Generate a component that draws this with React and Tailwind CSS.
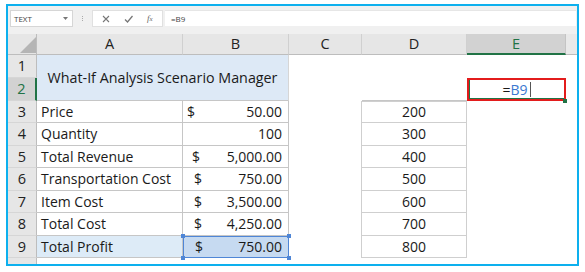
export default function App() {
  const rows = [
    { n: 3, a: 'Price', d: '$', dp: 'pl-[4px]', v: '50.00', dv: 200 },
    { n: 4, a: 'Quantity', d: '', dp: 'pl-[4px]', v: '100', dv: 300 },
    { n: 5, a: 'Total Revenue', d: '$', dp: 'pl-[9px]', v: '5,000.00', dv: 400 },
    { n: 6, a: 'Transportation Cost', d: '$', dp: 'pl-[11px]', v: '750.00', dv: 500 },
    { n: 7, a: 'Item Cost', d: '$', dp: 'pl-[11px]', v: '3,500.00', dv: 600 },
    { n: 8, a: 'Total Cost', d: '$', dp: 'pl-[11px]', v: '4,250.00', dv: 700 },
    { n: 9, a: 'Total Profit', d: '$', dp: 'pl-[11px]', v: '750.00', dv: 800 },
  ];
  const rowHdr = 'flex items-center justify-center bg-[#e6e6e6] border-r border-r-[#bdbdbd] border-b border-b-[#d6d6d6] text-[14.5px] text-[#222]';
  const colHdr = 'flex items-center justify-center bg-[#e6e6e6] border-r border-r-[#d0d0d0] border-b border-b-[#bdbdbd] text-[14.5px] text-[#222]';
  return (
    <div className="w-[585px] h-[272px] bg-white pl-[6px] pt-[4px] font-['Open_Sans',sans-serif] text-[#1a1a1a] leading-[18px]">
      <div className="w-[573px] h-[262px] border-2 border-[#0db0ee] flex flex-col bg-white overflow-hidden">
        {/* toolbar */}
        <div className="h-[28px] bg-[#f0f0f0] flex items-start pt-[4px] pl-[2px] pr-[1px] gap-0 shrink-0">
          <div className="w-[63px] h-[17px] bg-white border border-[#d6d6d6] flex items-center justify-between pl-[3px] pr-[4px]">
            <span className="text-[8px] text-[#444] leading-none">TEXT</span>
            <svg width="5" height="3" viewBox="0 0 5 3"><path d="M0 0 L5 0 L2.5 3 Z" fill="#777" /></svg>
          </div>
          <div className="w-[19px] h-[17px] flex flex-col items-center justify-center gap-[1px]">
            <div className="w-[1px] h-[1px] bg-[#aaa]" />
            <div className="w-[1px] h-[1px] bg-[#aaa]" />
            <div className="w-[1px] h-[1px] bg-[#aaa]" />
          </div>
          <div className="w-[71px] h-[17px] bg-white border border-[#e0e0e0] flex items-center pl-[9px] gap-[14px]">
            <svg width="8" height="8" viewBox="0 0 8 8"><path d="M1 1 L7 7 M7 1 L1 7" stroke="#777" strokeWidth="1.1" /></svg>
            <svg width="9" height="8" viewBox="0 0 9 8"><path d="M1 4.5 L3.5 7 L8.5 1" stroke="#777" strokeWidth="1.3" fill="none" /></svg>
            <span className="font-['Liberation_Serif',serif] italic text-[9px] text-[#666] leading-none">f<span className="text-[7px]">x</span></span>
          </div>
          <div className="ml-[2px] flex-1 h-[16px] bg-white border-t border-t-[#e6e6e6] flex items-center pl-[6px]">
            <span className="text-[8px] text-[#444] leading-none">=B9</span>
          </div>
        </div>
        {/* sheet */}
        <div className="grid grid-cols-[29px_146px_106px_73px_105px_99px_1fr] grid-rows-[21px_23px_23px_22px_23px_22px_23px_22px_23px_22px_1fr] flex-1 min-h-0">
          {/* header row */}
          <div className="bg-[#e6e6e6] border-r border-r-[#bdbdbd] border-b border-b-[#bdbdbd] relative">
            <svg className="absolute left-[12px] top-[3px]" width="16" height="16" viewBox="0 0 16 16"><path d="M0 16 L16 16 L16 0 Z" fill="#b5b5b5" /></svg>
          </div>
          <div className={colHdr}>A</div>
          <div className={colHdr}>B</div>
          <div className={colHdr}>C</div>
          <div className={colHdr}>D</div>
          <div className="flex items-center justify-center bg-[#d2d2d2] border-r border-r-[#c4c4c4] border-b-2 border-b-[#217346] text-[14.5px] text-[#217346]">E</div>
          <div className="bg-[#e9e9e9] border-b border-b-[#bdbdbd]" />

          {/* row 1 */}
          <div className={rowHdr}>1</div>
          <div className="col-span-2 row-span-2 bg-[#dde9f6] border-b border-b-[#c6c6c6] border-r border-r-[#d6d6d6] flex items-center justify-center text-[14.3px] whitespace-nowrap">What-If Analysis Scenario Manager</div>
          <div />
          <div />
          <div />
          <div />
          {/* row 2 */}
          <div className="flex items-center justify-center bg-[#d2d2d2] border-r-2 border-r-[#217346] border-b border-b-[#d6d6d6] text-[14.5px] text-[#217346]">2</div>
          <div />
          <div className="border-b border-b-[#c6c6c6]" />
          <div className="relative border-2 border-[#e31c1c] flex items-center justify-center text-[14px]">
            <div className="absolute inset-0 border-l border-b border-[#217346]" />
            <span>=</span><span className="text-[#3b78d0]">B9</span>
            <span className="w-[1px] h-[15px] bg-[#555] ml-[2px]" />
            <div className="absolute right-[-3px] bottom-[-4px] w-[4px] h-[4px] bg-[#217346]" />
          </div>
          <div />

          {rows.map((r) => {
            const last = r.n === 9;
            return [
              <div key={`h${r.n}`} className={rowHdr}>{r.n}</div>,
              <div key={`a${r.n}`} className={`${last ? 'bg-[#ddebf7]' : ''} border-r border-r-[#c6c6c6] border-b border-b-[#c6c6c6] flex items-center pl-[4px] text-[14px] whitespace-nowrap`}>{r.a}</div>,
              <div key={`b${r.n}`} className={`relative ${last ? 'bg-[#c6daf1] border border-[#4f86d6]' : 'border-r border-r-[#c6c6c6] border-b border-b-[#c6c6c6]'} flex items-center justify-between ${r.dp} pr-[6px] text-[14px]`}>
                <span>{r.d}</span>
                <span>{r.v}</span>
                {last && (
                  <>
                    <div className="absolute left-[-3px] top-[-3px] w-[4px] h-[4px] bg-[#4f86d6]" />
                    <div className="absolute right-[-3px] top-[-3px] w-[4px] h-[4px] bg-[#4f86d6]" />
                    <div className="absolute left-[-3px] bottom-[-3px] w-[4px] h-[4px] bg-[#4f86d6]" />
                    <div className="absolute right-[-3px] bottom-[-3px] w-[4px] h-[4px] bg-[#4f86d6]" />
                  </>
                )}
              </div>,
              <div key={`c${r.n}`} className="border-r border-r-[#cfcfcf]" />,
              <div key={`d${r.n}`} className={`border-r border-r-[#cfcfcf] border-b border-b-[#cfcfcf] ${r.n === 3 ? 'border-t border-t-[#cfcfcf]' : ''} flex items-center justify-center text-[14px]`}>{r.dv}</div>,
              <div key={`e${r.n}`} />,
              <div key={`f${r.n}`} />,
            ];
          })}
          {/* partial row */}
          <div className="bg-[#e6e6e6] border-r border-r-[#bdbdbd]" />
          <div />
          <div />
          <div />
          <div />
          <div />
          <div />
        </div>
      </div>
    </div>
  );
}
